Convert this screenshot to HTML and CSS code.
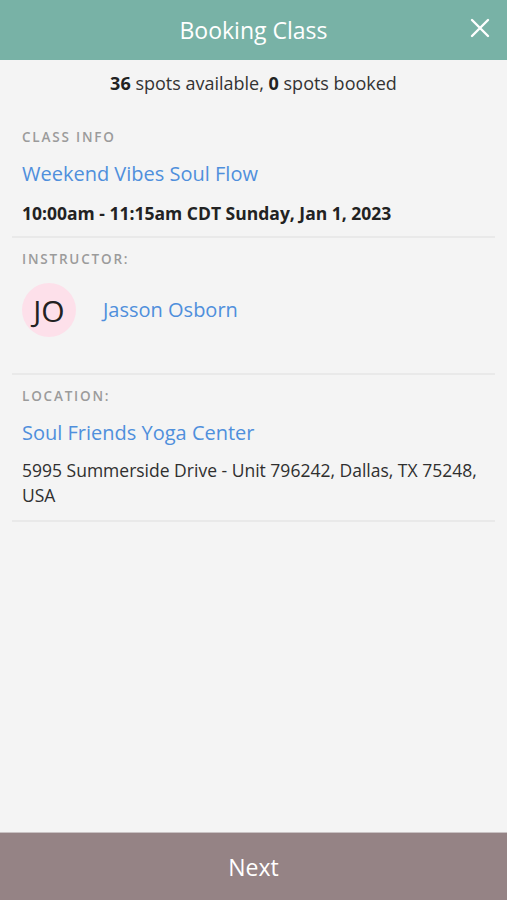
FILE: index.html
```html
<!DOCTYPE html>
<html lang="en">
<head>
    <meta charset="UTF-8">
    <meta name="viewport" content="width=device-width, initial-scale=1.0">
    <title>Booking Class</title>
    <link rel="stylesheet" href="styles.css">
</head>
<body>
    <div class="app">
        <header class="top-bar">
            <h1>Booking Class</h1>
            <button class="close-btn" aria-label="Close">
                <svg width="20" height="20" viewBox="0 0 20 20">
                    <path d="M2 2 L18 18 M18 2 L2 18" stroke="#fff" stroke-width="2.4" stroke-linecap="round"/>
                </svg>
            </button>
        </header>

        <main class="content">
            <p class="spots"><b>36</b> spots available, <b>0</b> spots booked</p>

            <section class="block">
                <div class="label">CLASS INFO</div>
                <a class="link title">Weekend Vibes Soul Flow</a>
                <div class="time">10:00am - 11:15am CDT Sunday, Jan 1, 2023</div>
            </section>

            <section class="block">
                <div class="label">INSTRUCTOR:</div>
                <div class="instructor">
                    <div class="avatar">JO</div>
                    <a class="link">Jasson Osborn</a>
                </div>
            </section>

            <section class="block">
                <div class="label">LOCATION:</div>
                <a class="link title">Soul Friends Yoga Center</a>
                <div class="address">5995 Summerside Drive - Unit 796242, Dallas, TX 75248, USA</div>
            </section>
        </main>

        <button class="next-btn">Next</button>
    </div>
</body>
</html>
```

FILE: styles.css
```css
body {
    margin: 0;
    font-family: "Open Sans", "Noto Sans", sans-serif;
    background: #f4f4f4;
    color: #2b2b2b;
}

.app {
    display: flex;
    flex-direction: column;
    height: 100vh;
}

.top-bar {
    position: relative;
    height: 60px;
    background-color: #78b2a6;
    display: flex;
    align-items: center;
    justify-content: center;
}
.top-bar h1 {
    margin: 0;
    font-size: 23px;
    font-weight: 400;
    color: #fff;
}
.close-btn {
    position: absolute;
    right: 17px;
    top: 18px;
    padding: 0;
    background: none;
    border: none;
    display: flex;
}

.content {
    flex: 1;
}

.spots {
    margin: 0;
    padding: 12px 0 22px;
    text-align: center;
    font-size: 18px;
    line-height: 22px;
    color: #333;
}
.spots b {
    font-weight: 700;
    color: #222;
}

.block {
    margin: 0 12px;
    padding: 13px 10px 12px;
    border-bottom: 2px solid #e9e9e9;
}

.label {
    font-size: 13.5px;
    line-height: 16px;
    letter-spacing: 1.8px;
    font-weight: 600;
    color: #9b9b9b;
    margin-bottom: 16px;
}

.link {
    color: #4f8fdc;
    font-size: 20px;
    line-height: 26px;
}
.title {
    display: block;
}

.time {
    margin-top: 15px;
    font-size: 17.5px;
    line-height: 22px;
    font-weight: 700;
    color: #222;
}

.instructor {
    display: flex;
    align-items: center;
    gap: 27px;
    margin-bottom: 24px;
}
.avatar {
    width: 54px;
    height: 54px;
    border-radius: 50%;
    background-color: #fde0ea;
    display: flex;
    align-items: center;
    justify-content: center;
    font-size: 30px;
    color: #222;
}

.address {
    margin-top: 12px;
    font-size: 17.5px;
    line-height: 25px;
    color: #2f2f2f;
}

.next-btn {
    height: 68px;
    border: none;
    border-top: 1px solid #c9c2c3;
    background-color: #958385;
    color: #fff;
    font-family: inherit;
    font-size: 23px;
}
```
